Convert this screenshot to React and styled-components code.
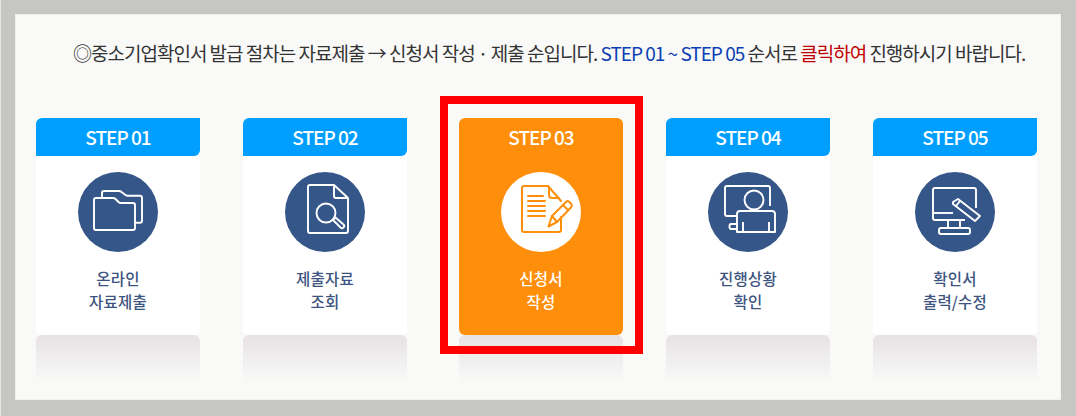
import React from 'react'
import styled, { createGlobalStyle } from 'styled-components'

const FolderIcon = () => (
  <svg viewBox="0 0 80 80" fill="none" stroke="#fff" strokeWidth="1.9" strokeLinejoin="round">
    <path d="M16 28q0-2 2-2h17q1.500 0 2.500 1l3 3q1 1 2.500 1h12q2 0 2 2v23q0 2-2 2H18q-2 0-2-2z" />
    <path d="M24 25v-4q0-2 2-2h15q1.500 0 2.500 1l4 3q1 .8 2.500.8h12q2 0 2 2v23q0 2-2 2h-4" />
  </svg>
)

const DocSearchIcon = () => (
  <svg viewBox="0 0 80 80" fill="none" stroke="#fff" strokeWidth="1.9" strokeLinejoin="round" strokeLinecap="round">
    <path d="M49 13H25q-2 0-2 2v44q0 2 2 2h36q2 0 2-2V26z" />
    <path d="M49 14v10q0 2 2 2h11" />
    <circle cx="41" cy="41" r="9.500" />
    <path d="M48 48l2.500-2.500 8 7q1.500 1.500 0 3t-3 0z" />
  </svg>
)

const WriteIcon = () => (
  <svg viewBox="0 0 80 80" fill="none" stroke="#ff8f0b" strokeWidth="2" strokeLinejoin="round" strokeLinecap="round">
    <path d="M60 29L47 14H23q-2 0-2 2v42q0 2 2 2h35q2 0 2-2V45" />
    <path d="M48 15v8q0 3 3 3h7" />
    <path d="M27 24h15M27 29h17M27 34h17M27 39h17M27 44h17" />
    <path d="M47.500 54.500L51 44l14-14q1.500-1.500 3-.3l2.500 2.500q1 1.500-.3 3L56 50z" />
    <path d="M51 44l5 6M62 33l5 5" />
  </svg>
)

const PersonIcon = () => (
  <svg viewBox="0 0 80 80" fill="none" stroke="#fff" strokeWidth="1.9" strokeLinejoin="round">
    <path d="M29 44H19q-2 0-2-2V16q0-2 2-2h41q2 0 2 2v18" />
    <circle cx="46" cy="28" r="9.500" fill="#355689" />
    <path d="M29 60V42q0-3 3-3h32q3 0 3 3v18z" />
    <path d="M35 50v10M61 50v10" />
    <path d="M29 52h-6q-1.500 0-1.500 2.500t1.500 2.500h6" />
  </svg>
)

const ScreenPenIcon = () => (
  <svg viewBox="0 0 80 80" fill="none" stroke="#fff" strokeWidth="1.9" strokeLinejoin="round">
    <path d="M61 36V18q0-2-2-2H20q-2 0-2 2v28q0 2 2 2h30" />
    <path d="M18 41h20" />
    <path d="M38 30l5-3 22 17-5 5-22-17z" />
    <path d="M41 34l4-5" />
    <path d="M33 48v8M45 48v8" />
    <path d="M26 56h27q2 0 2 2v2q0 2-2 2H26q-2 0-2-2v-2q0-2 2-2z" />
  </svg>
)

const steps = [
  { no: '01', label: ['온라인', '자료제출'], Icon: FolderIcon },
  { no: '02', label: ['제출자료', '조회'], Icon: DocSearchIcon },
  { no: '03', label: ['신청서', '작성'], Icon: WriteIcon, active: true },
  { no: '04', label: ['진행상황', '확인'], Icon: PersonIcon },
  { no: '05', label: ['확인서', '출력/수정'], Icon: ScreenPenIcon },
]

export default function App() {
  return (
    <>
      <GlobalStyle />
      <Frame>
        <Panel>
          <Notice>
            ◎중소기업확인서 발급 절차는 자료제출 → 신청서 작성 · 제출 순입니다.{' '}
            <Blue>STEP 01 ~ STEP 05</Blue> 순서로 <Red>클릭하여</Red> 진행하시기 바랍니다.
          </Notice>
          <StepRow>
            {steps.map(({ no, label, Icon, active }) => (
              <StepColumn key={no} $active={active}>
                <Card $active={active}>
                  <CardHead $active={active}>STEP {no}</CardHead>
                  <Badge $active={active}>
                    <Icon />
                  </Badge>
                  <CardLabel $active={active}>
                    {label[0]}
                    <br />
                    {label[1]}
                  </CardLabel>
                  {active && <Highlight />}
                </Card>
                <Reflection />
              </StepColumn>
            ))}
          </StepRow>
        </Panel>
      </Frame>
    </>
  )
}

const GlobalStyle = createGlobalStyle`
  html, body {
    margin: 0;
    padding: 0;
    background: #c6c6c4;
  }
`

const Frame = styled.div`
  box-sizing: border-box;
  width: 1076px;
  height: 416px;
  padding: 14px 15px 15px 14px;
  border-left: 1px solid #e6e6e4;
  background: #c6c6c4;
  font-family: "Noto Sans CJK KR", "Noto Sans", sans-serif;
`

const Panel = styled.div`
  box-sizing: border-box;
  height: 386px;
  padding: 0 23px 0 20px;
  border: 1px solid #f1f1ef;
  background: #f9f9f7;
`

const Notice = styled.p`
  margin: 0;
  height: 103px;
  padding: 23px 0 0 37px;
  box-sizing: border-box;
  font-size: 19px;
  line-height: 30px;
  font-weight: 400;
  letter-spacing: -1px;
  color: #333;
  white-space: nowrap;
`

const Blue = styled.span`
  color: #0b3fb5;
`

const Red = styled.span`
  color: #c00000;
`

const StepRow = styled.div`
  display: flex;
  gap: 43px;
`

const StepColumn = styled.div`
  width: 164px;
  margin-left: ${p => (p.$active ? '9px' : '0')};
`

const Card = styled.div`
  position: relative;
  height: 217px;
  border-radius: 6px;
  background: ${p => (p.$active ? '#ff8f0b' : '#fff')};
  text-align: center;
`

const CardHead = styled.div`
  height: 38px;
  line-height: 38px;
  border-radius: 6px 0 6px 0;
  background: ${p => (p.$active ? 'transparent' : '#009fff')};
  color: #fff;
  font-size: 19px;
  font-weight: 500;
  letter-spacing: -1px;
`

const Badge = styled.div`
  display: flex;
  align-items: center;
  justify-content: center;
  width: 80px;
  height: 80px;
  margin: 16px auto 0;
  border-radius: 50%;
  background: ${p => (p.$active ? '#fff' : '#355689')};

  svg {
    width: 80px;
    height: 80px;
  }
`

const CardLabel = styled.div`
  margin-top: 15px;
  font-size: 15.5px;
  line-height: 22.5px;
  font-weight: 500;
  letter-spacing: 0.2px;
  color: ${p => (p.$active ? '#fff' : '#3d5480')};
`

const Highlight = styled.div`
  position: absolute;
  top: -22px;
  right: -20px;
  bottom: -19px;
  left: -19px;
  border: 8px solid #ff0000;
  pointer-events: none;
`

const Reflection = styled.div`
  height: 48px;
  border-radius: 6px;
  background: linear-gradient(#e7e2e3, #f3f3f3 70%, #f9f9f7);
`
